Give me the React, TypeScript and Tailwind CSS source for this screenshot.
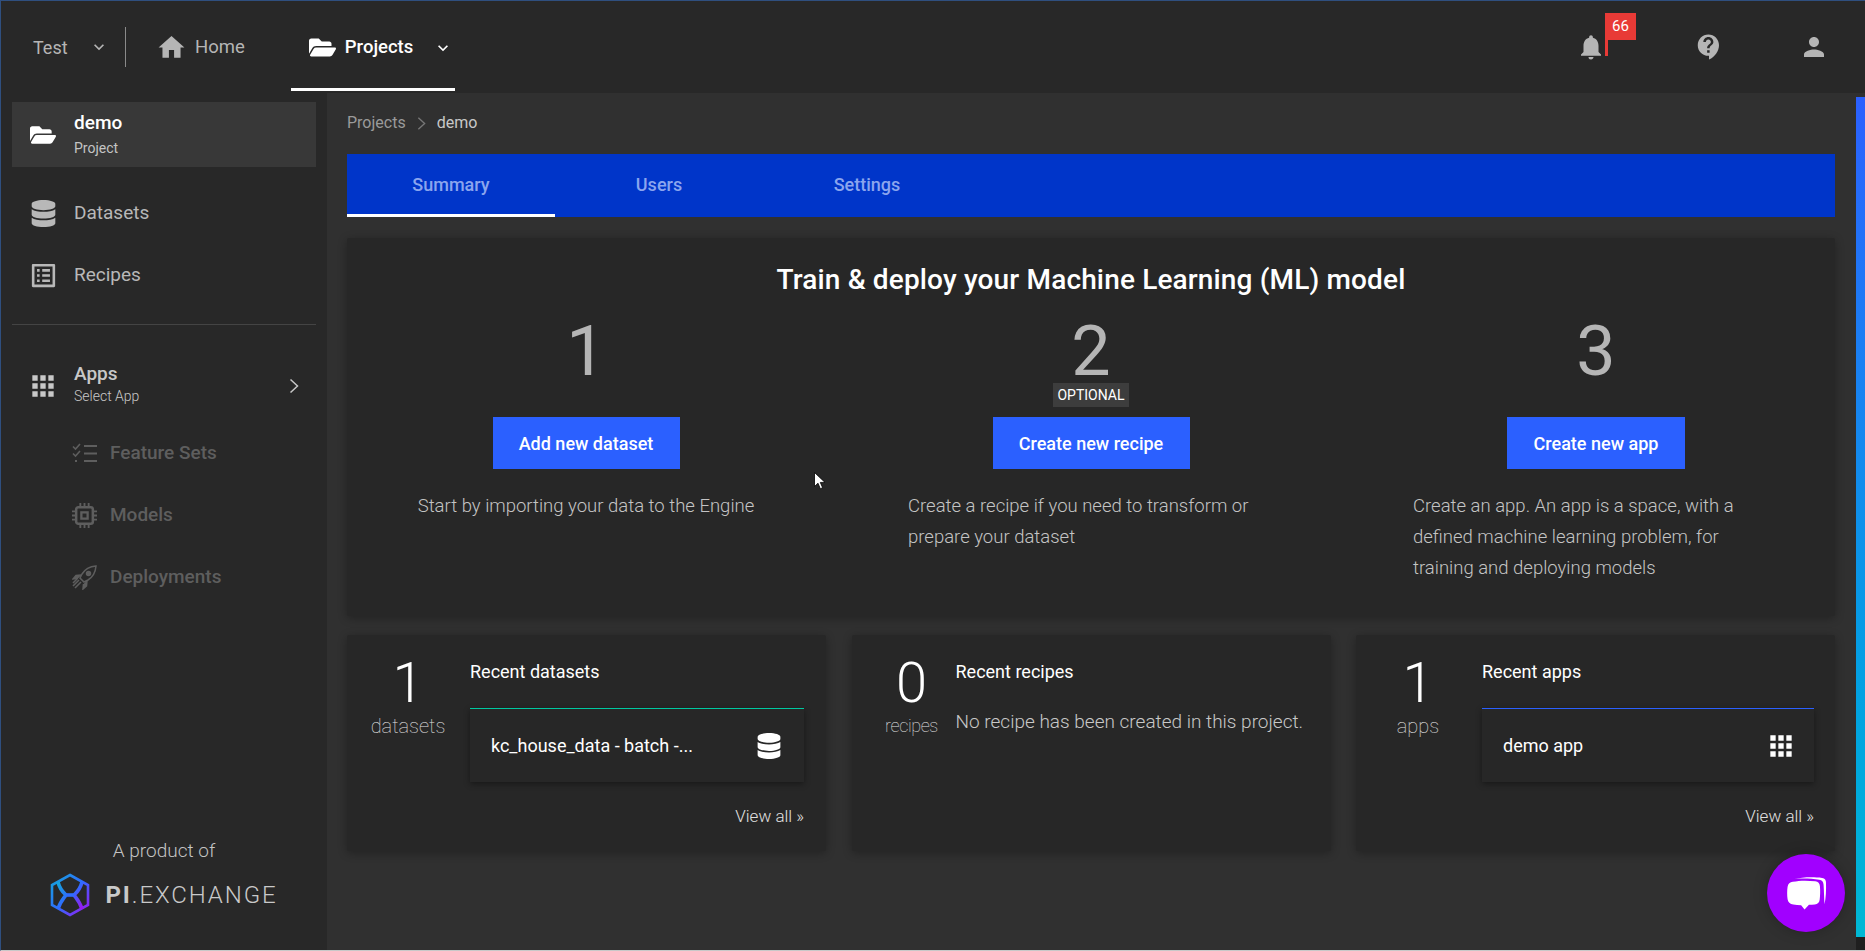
import { FaDatabase, FaFolderOpen } from "react-icons/fa";
import {
  MdApps,
  MdContactSupport,
  MdHome,
  MdKeyboardArrowDown,
  MdNotifications,
  MdOutlineListAlt,
  MdPerson,
} from "react-icons/md";

function ChevronRight({ className }: { className?: string }) {
  return (
    <svg viewBox="0 0 10 16" fill="none" stroke="currentColor" strokeWidth="1.5" className={className}>
      <path d="M1.5 1.5 8.5 8l-7 6.5" />
    </svg>
  );
}

function FeatureIcon() {
  return (
    <svg viewBox="0 0 25 20" fill="none" stroke="currentColor" strokeWidth="2" className="w-[25px] h-[20px]">
      <path d="M1 3.5 3.5 6 8 1M1 10.5 3.5 13 8 8" strokeWidth="1.6" />
      <path d="M3 18h2M12 3h13M12 10.5h13M12 18h13" />
    </svg>
  );
}

function ChipIcon() {
  return (
    <svg viewBox="0 0 24 24" fill="none" stroke="currentColor" className="w-[25px] h-[25px]">
      <rect x="4" y="4" width="16" height="16" rx="2" strokeWidth="2.4" />
      <rect x="9" y="9" width="6" height="6" strokeWidth="2.2" />
      <path d="M8 0v3M12 0v3M16 0v3M8 21v3M12 21v3M16 21v3M0 8h3M0 12h3M0 16h3M21 8h3M21 12h3M21 16h3" strokeWidth="1.8" />
    </svg>
  );
}

function RocketIcon() {
  return (
    <svg viewBox="0 0 25 25" fill="none" stroke="currentColor" strokeWidth="1.5" className="w-[25px] h-[25px]">
      <path d="M24 1c-6 .5-11 3-14 8l-2 4 4 4 4-2c5-3 7.5-8 8-14Z" />
      <circle cx="16.5" cy="8.5" r="2" fill="currentColor" />
      <path d="M9.5 10 4 10.500 1 14l5-.5M15 15.500 14.500 21l-3.500 3 .5-5" fill="currentColor" />
      <path d="m7 15-6 6M9 17l-6 6M5 14l-4 4" strokeWidth="1.6" />
    </svg>
  );
}

function ChatIcon() {
  return (
    <svg viewBox="0 0 42 40" className="w-[41px] h-[39px]">
      <path d="M9 5c8-2 20-2 28-1 3 .5 4 2 4 5 .2 8 0 15-1.500 22-.5-7-.5-13-1-20-.2-3-1.500-4.500-4.500-5C26 4.500 17 4.500 9 5Z" fill="#fff" />
      <path d="M7 8c7-1.500 15-1.500 23-.5 3 .4 4.500 2 4.800 5 .4 5 .2 10-.3 14-.4 3-2 4.500-5 4.800-2 .2-4 .3-6 .3L19 36.500 15.500 32c-3 0-5.500-.2-8-.6C4 31 2 29 1.600 26c-.6-4.500-.6-9 0-13C2 10 4 8.500 7 8Z" fill="#fff" />
    </svg>
  );
}

function Logo() {
  return (
    <svg viewBox="0 0 40 44" className="w-[40px] h-[44px]">
      <defs>
        <linearGradient id="hex" x1="0" y1="0" x2="1" y2="1">
          <stop offset="0" stopColor="#14a6d8" />
          <stop offset="0.5" stopColor="#2f6cff" />
          <stop offset="1" stopColor="#a014f0" />
        </linearGradient>
      </defs>
      <path d="M20 2 38 12v20L20 42 2 32V12Z" fill="none" stroke="url(#hex)" strokeWidth="2.6" />
      <path d="M8 9c2 8 6 11 8 13-2 3-6 7-8 14M32 9c-2 8-6 11-8 13 2 3 6 7 8 14" fill="none" stroke="url(#hex)" strokeWidth="3.6" />
      <path d="M16 22h8" stroke="#2f6cff" strokeWidth="3.6" />
    </svg>
  );
}

function Cursor() {
  return (
    <svg viewBox="0 0 12 18" className="absolute left-[813px] top-[471px] w-[12px] h-[18px]">
      <path d="M.5.500v14l3.500-3.300 2.300 5.500 2.300-1-2.300-5.300h4.700Z" fill="#fff" stroke="#000" strokeWidth="0.8" />
    </svg>
  );
}

function SideItem({ label, icon }: { label: string; icon: React.ReactNode }) {
  return (
    <div className="h-[62px] flex items-center text-[#b8b8b8] text-[19px]">
      <div className="w-[62px] flex justify-center">{icon}</div>
      <span>{label}</span>
    </div>
  );
}

function SubItem({ label, icon }: { label: string; icon: React.ReactNode }) {
  return (
    <div className="h-[62px] flex items-center pl-[60px] text-[#5e5e5e] text-[19px] font-medium">
      <div className="w-[38px]">{icon}</div>
      <span>{label}</span>
    </div>
  );
}

function Step({
  num,
  button,
  buttonWidth,
  text,
  left,
  optional,
}: {
  num: string;
  button: string;
  buttonWidth: string;
  text: string;
  left?: boolean;
  optional?: boolean;
}) {
  return (
    <div className="relative w-[366px] flex flex-col items-center">
      <div className="h-[62px] leading-[62px] text-[70px] text-[#b5b5b5]">{num}</div>
      {optional && (
        <div className="absolute top-[63px] h-[24px] w-[76px] bg-[#3d3d3d] text-white text-[14px] leading-[24px] text-center">
          OPTIONAL
        </div>
      )}
      <button className={`mt-[35px] h-[52px] bg-[#2b60ff] text-white text-[18px] font-medium ${buttonWidth}`}>
        {button}
      </button>
      <p className={`mt-[22px] w-full text-[18.5px] leading-[31px] font-light text-[#c4c4c4] ${left ? "text-left" : "text-center"}`}>
        {text}
      </p>
    </div>
  );
}

function RecentCard({
  count,
  unit,
  unitClass,
  title,
  pad,
  colWidth,
  gap,
  children,
}: {
  count: string;
  unit: string;
  unitClass: string;
  title: string;
  pad: string;
  colWidth: string;
  gap: string;
  children: React.ReactNode;
}) {
  return (
    <div className={`w-[479px] h-[216px] bg-[#272727] shadow-[0_2px_10px_rgba(0,0,0,0.3)] rounded-[2px] flex ${pad} ${gap}`}>
      <div className={`flex flex-col items-center shrink-0 pt-[20px] ${colWidth}`}>
        <div className="h-[56px] leading-[56px] text-[56px] font-light text-white">{count}</div>
        <div className={`mt-[1px] leading-[28px] font-thin text-[#e4e4e4] whitespace-nowrap ${unitClass}`}>{unit}</div>
      </div>
      <div className="flex-1 min-w-0 pt-[24px]">
        <div className="text-[18px] leading-[26px] text-white">{title}</div>
        {children}
      </div>
    </div>
  );
}

function RecentItem({
  label,
  icon,
  border,
}: {
  label: string;
  icon: React.ReactNode;
  border: string;
}) {
  return (
    <>
      <div className={`mt-[23px] h-[74px] border-t flex items-center justify-between pl-[21px] pr-[22px] shadow-[0_2px_6px_rgba(0,0,0,0.4)] text-white text-[18px] ${border}`}>
        <span>{label}</span>
        {icon}
      </div>
      <div className="mt-[22px] text-right text-[17px] leading-[24px] font-light text-[#e0e0e0]">View all »</div>
    </>
  );
}

export default function App() {
  return (
    <div className="relative h-screen w-full overflow-hidden flex flex-col bg-[#282828] border-t border-l border-b border-t-[#2f4f7f] border-l-[#2f4f7f] border-b-[#c8c8c8] font-['Roboto',sans-serif]">
      <header className="h-[92px] shrink-0 flex items-center pl-[32px] pr-[36px] bg-[#282828]">
        <span className="text-[18px] text-[#b5b5b5] w-[35px]">Test</span>
        <MdKeyboardArrowDown size={20} className="ml-[21px] text-[#b5b5b5]" />
        <div className="ml-[16px] w-px h-[40px] bg-[#8a8a8a]" />
        <MdHome size={31} className="ml-[30px] text-[#b5b5b5]" />
        <span className="ml-[8px] mt-[1px] text-[18.5px] text-[#b5b5b5]">Home</span>
        <div className="ml-[46px] h-full w-[164px] flex items-center pl-[18px] pt-[1px] relative text-white">
          <FaFolderOpen size={27} />
          <span className="ml-[9px] text-[18.5px] font-medium">Projects</span>
          <MdKeyboardArrowDown size={20} className="ml-[20px]" />
          <div className="absolute left-0 right-0 bottom-[2px] h-[3px] bg-white" />
        </div>
        <div className="ml-auto flex items-center gap-[88px] text-[#b5b5b5]">
          <div className="relative">
            <MdNotifications size={30} />
            <div className="absolute left-[29px] top-[-19px] w-[31px] h-[27px] bg-[#e83a36] text-white text-[15px] leading-[27px] text-center">66</div>
            <div className="absolute left-[29px] top-[0px] w-[3px] h-[24px] bg-[#e83a36]" />
          </div>
          <div className="flex items-center gap-[75px]">
            <MdContactSupport size={30} />
            <MdPerson size={30} />
          </div>
        </div>
      </header>

      <div className="flex-1 min-h-0 flex">
        <aside className="w-[326px] shrink-0 flex flex-col bg-[#282828] pl-[11px] pr-[11px] pt-[9px]">
          <div className="h-[65px] bg-[#383838] flex items-center text-white">
            <div className="w-[62px] flex justify-center">
              <FaFolderOpen size={26} />
            </div>
            <div>
              <div className="text-[19px] leading-[24px] font-medium">demo</div>
              <div className="text-[14px] leading-[20px] text-[#c4c4c4] mt-[3px]">Project</div>
            </div>
          </div>
          <div className="mt-[15px]">
            <SideItem label="Datasets" icon={<FaDatabase size={27} />} />
            <SideItem label="Recipes" icon={<MdOutlineListAlt size={31} />} />
          </div>
          <div className="mt-[18px] h-px bg-[#444444]" />
          <div className="mt-[30px] h-[62px] flex items-center text-[#c8c8c8]">
            <div className="w-[62px] flex justify-center">
              <MdApps size={32} />
            </div>
            <div className="-mt-[2px]">
              <div className="text-[19px] leading-[22px] font-medium">Apps</div>
              <div className="text-[14px] leading-[23px] font-light">Select App</div>
            </div>
            <ChevronRight className="ml-auto mr-[17px] w-[10px] h-[16px]" />
          </div>
          <div className="mt-[5px] mb-auto">
            <SubItem label="Feature Sets" icon={<FeatureIcon />} />
            <SubItem label="Models" icon={<ChipIcon />} />
            <SubItem label="Deployments" icon={<RocketIcon />} />
          </div>
          <div className="flex flex-col items-center pb-[33px]">
            <div className="text-[19px] leading-[26px] font-light text-[#c4c4c4]">A product of</div>
            <div className="mt-[9px] flex items-center gap-[15px] text-[#c9c9c9]">
              <Logo />
              <span className="text-[24px] leading-[30px] whitespace-nowrap tracking-[1.9px]">
                <b className="font-bold">PI</b>
                <span className="font-light">.EXCHANGE</span>
              </span>
            </div>
          </div>
        </aside>

        <main className="flex-1 min-w-0 bg-[#303030] pl-[20px] pr-[21px] pt-[18px]">
          <div className="h-[24px] flex items-center text-[16px] text-[#9a9a9a]">
            Projects
            <ChevronRight className="mx-[11px] w-[9px] h-[15px] text-[#777777]" />
            <span className="text-[#c8c8c8]">demo</span>
          </div>
          <div className="mt-[19px] h-[63px] bg-[#0035c9] flex text-[18px] font-medium text-[#8ba5ee]">
            <div className="w-[208px] flex items-center justify-center border-b-[3px] border-white">Summary</div>
            <div className="w-[208px] flex items-center justify-center pb-[3px]">Users</div>
            <div className="w-[208px] flex items-center justify-center pb-[3px]">Settings</div>
          </div>

          <section className="mt-[21px] h-[378px] bg-[#272727] rounded-[2px] shadow-[0_2px_10px_rgba(0,0,0,0.3)] pt-[26px]">
            <h1 className="text-center text-[28px] leading-[32px] font-medium tracking-[0.15px] text-white">
              Train &amp; deploy your Machine Learning (ML) model
            </h1>
            <div className="mt-[24px] flex justify-center gap-[139px]">
              <Step num="1" button="Add new dataset" buttonWidth="w-[187px]" text="Start by importing your data to the Engine" />
              <Step num="2" optional left button="Create new recipe" buttonWidth="w-[197px]" text="Create a recipe if you need to transform or prepare your dataset" />
              <Step num="3" left button="Create new app" buttonWidth="w-[178px]" text="Create an app. An app is a space, with a defined machine learning problem, for training and deploying models" />
            </div>
          </section>

          <div className="mt-[19px] flex justify-between">
            <RecentCard count="1" unit="datasets" unitClass="text-[20px]" title="Recent datasets" pad="pl-[25px] pr-[22px]" colWidth="w-[72px]" gap="gap-[26px]">
              <RecentItem label="kc_house_data - batch -..." border="border-[#00c8a0]" icon={<FaDatabase size={26} />} />
            </RecentCard>
            <RecentCard count="0" unit="recipes" unitClass="text-[18px] tracking-[-0.4px]" title="Recent recipes" pad="pl-[38px] pr-[22px]" colWidth="w-[44px]" gap="gap-[22px]">
              <p className="mt-[24px] text-[19px] leading-[26px] font-light text-[#c8c8c8] whitespace-nowrap">No recipe has been created in this project.</p>
            </RecentCard>
            <RecentCard count="1" unit="apps" unitClass="text-[20px]" title="Recent apps" pad="pl-[40px] pr-[21px]" colWidth="w-[44px]" gap="gap-[42px]">
              <RecentItem label="demo app" border="border-[#2b60ff]" icon={<MdApps size={32} className="-mr-[5px]" />} />
            </RecentCard>
          </div>
        </main>

        <div className="w-[9px] shrink-0 flex flex-col bg-[#303030] pt-[4px]">
          <div className="flex-1 bg-gradient-to-b from-[#2b60ff] to-[#00b8d4]" />
          <div className="h-[13px] bg-[#1f1f1f]" />
        </div>
      </div>

      <div className="absolute left-[1766px] top-[853px] w-[78px] h-[78px] rounded-full bg-[#a100ff] flex items-center justify-center shadow-[0_0_14px_rgba(0,0,0,0.25)]">
        <ChatIcon />
      </div>
      <Cursor />
    </div>
  );
}
